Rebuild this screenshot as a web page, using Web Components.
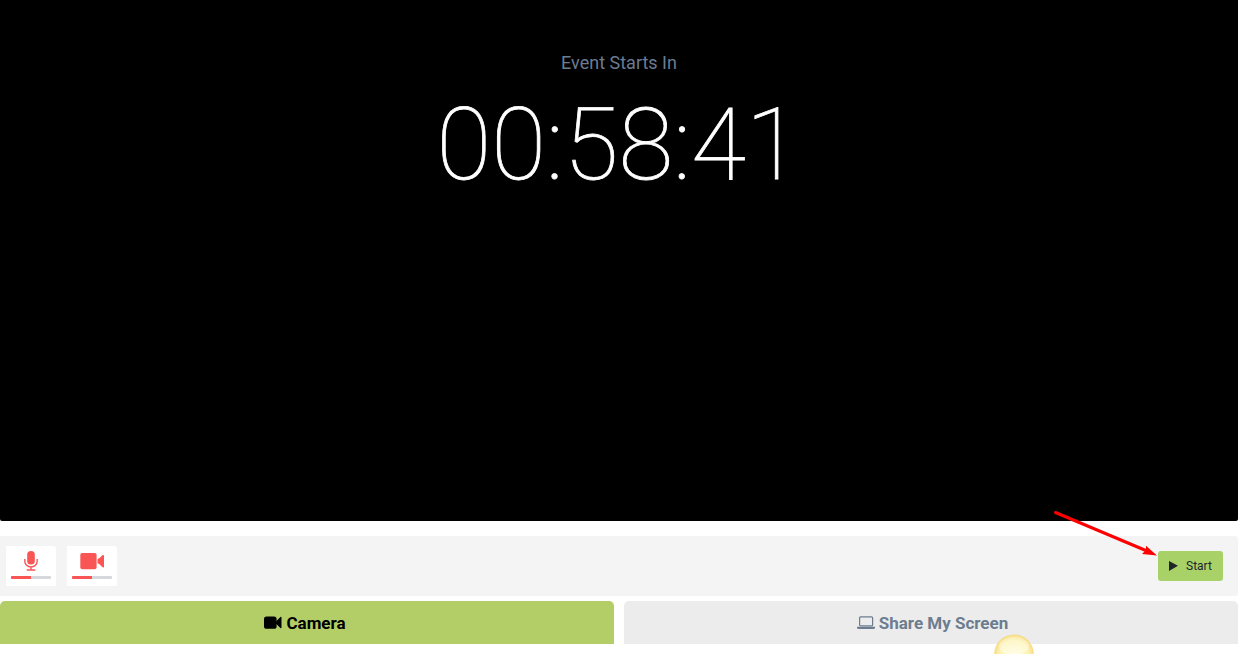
<!DOCTYPE html>
<html lang="en">
<head>
  <meta charset="UTF-8">
  <title>Event Studio</title>
  <style>
    body {
      background-color: white;
      font-family: Roboto, "Liberation Sans", sans-serif;
      margin: 0;
      overflow: hidden;
    }
  </style>
</head>
<body>
  <event-studio>
    <event-countdown label="Event Starts In" time="00:58:41"></event-countdown>
    <control-bar>
      <device-toggle>
        <svg width="14" height="20" viewBox="0 0 14 20">
          <rect x="3.2" y="0" width="7.6" height="13.6" rx="3.6" fill="#fa5555"/>
          <path d="M.8 8v2.3a6.2 5.7 0 0 0 12.4 0V8M7 16v3M2.7 19h8.6" fill="none" stroke="#fa5555" stroke-width="1.4"/>
        </svg>
      </device-toggle>
      <device-toggle>
        <svg width="24" height="20" viewBox="0 0 24 20">
          <rect x="0.3" y="2" width="16.3" height="16.3" rx="2" fill="#fa5555"/>
          <path d="M17.5 8.1C20 7.5 21.5 4.8 22.7 4.1Q24 3.5 24 5v10.5Q24 17 22.7 16.2C21.5 15.5 20 12.8 17.5 12.2z" fill="#fa5555"/>
        </svg>
      </device-toggle>
      <start-button slot="action">Start</start-button>
    </control-bar>
    <source-tabs>
      <source-tab active>
        <svg slot="icon" width="18" height="13" viewBox="0 0 18 13">
          <rect y=".4" width="12.6" height="12.4" rx="2.6" fill="black"/>
          <path d="M12 5.4 16.4 1.1Q17.5.4 17.5 1.7v9.6q0 1.3-1.1.6L12 7.8z" fill="black"/>
        </svg>
        Camera
      </source-tab>
      <source-tab>
        <svg slot="icon" width="18" height="13" viewBox="0 0 18 13">
          <rect x="2.6" y=".9" width="13" height="9" rx="1" fill="none" stroke="#6c7d8f" stroke-width="1.2"/>
          <path d="M0 10.8h18v.6q0 1.6-1.5 1.6h-15Q0 13 0 11.4z" fill="#6c7d8f"/>
        </svg>
        Share My Screen
      </source-tab>
    </source-tabs>
  </event-studio>
  <pointer-arrow></pointer-arrow>
  <click-spot></click-spot>

  <script>
    /**
     * Page column: countdown, controls, then the source tabs
     */
    class EventStudio extends HTMLElement {
      constructor() {
        super();
        this.attachShadow({ mode: "open" }).innerHTML = `
          <style>
            :host {
              display: flex;
              flex-direction: column;
              height: 654px;
            }
          </style>
          <slot></slot>
        `;
      }
    }

    /**
     * Black stage with the time left until the event
     */
    class EventCountdown extends HTMLElement {
      connectedCallback() {
        let label = this.getAttribute("label");
        let time = this.getAttribute("time");

        this.attachShadow({ mode: "open" }).innerHTML = `
          <style>
            :host {
              background-color: black;
              border-radius: 0 0 2px 2px;
              box-sizing: border-box;
              display: block;
              height: 521px;
              margin-bottom: 15px;
              padding-top: 50px;
              text-align: center;
            }

            .label {
              color: #6b7c93;
              font-size: 18px;
              line-height: 26px;
              margin: 0;
            }

            .time {
              -webkit-text-stroke: 0.8px white;
              color: white;
              font-size: 100px;
              font-weight: 100;
              line-height: 120px;
              margin: 9px 1px 0 0;
            }
          </style>
          <p class="label">${label}</p>
          <p class="time">${time}</p>
        `;
      }
    }

    class ControlBar extends HTMLElement {
      constructor() {
        super();
        this.attachShadow({ mode: "open" }).innerHTML = `
          <style>
            :host {
              align-items: center;
              background-color: #f4f4f4;
              border-radius: 0 3px 3px 0;
              box-sizing: border-box;
              display: flex;
              height: 60px;
              justify-content: space-between;
              margin-bottom: 5px;
              padding: 0 15px 0 6px;
            }

            .devices {
              display: flex;
              gap: 11px;
            }
          </style>
          <div class="devices"><slot></slot></div>
          <slot name="action"></slot>
        `;
      }
    }

    /**
     * Device button with its icon and a level meter underneath
     */
    class DeviceToggle extends HTMLElement {
      constructor() {
        super();
        this.attachShadow({ mode: "open" }).innerHTML = `
          <style>
            :host {
              align-items: center;
              background-color: white;
              border-radius: 0 3px 0 0;
              box-sizing: border-box;
              display: flex;
              flex-direction: column;
              gap: 5px;
              height: 40px;
              padding-top: 5px;
              width: 50px;
            }

            .meter {
              background-color: #d5d9dd;
              border-radius: 1px;
              height: 3px;
              overflow: hidden;
              width: 40px;
            }

            .level {
              background-color: #fa5555;
              height: 100%;
              width: 50%;
            }
          </style>
          <slot></slot>
          <div class="meter"><div class="level"></div></div>
        `;
      }
    }

    class StartButton extends HTMLElement {
      constructor() {
        super();
        this.attachShadow({ mode: "open" }).innerHTML = `
          <style>
            :host {
              display: block;
            }

            button {
              align-items: center;
              background-color: #a8d268;
              border: none;
              border-radius: 3px;
              color: #212529;
              display: flex;
              font: 12px Roboto, sans-serif;
              gap: 8px;
              height: 30px;
              padding: 0 0 0 11px;
              width: 65px;
            }
          </style>
          <button>
            <svg width="9" height="10" viewBox="0 0 9 10">
              <path d="M0 0 9 4.7 0 10z" fill="#212529"/>
            </svg>
            <slot></slot>
          </button>
        `;
      }
    }

    class SourceTabs extends HTMLElement {
      constructor() {
        super();
        this.attachShadow({ mode: "open" }).innerHTML = `
          <style>
            :host {
              display: grid;
              gap: 10px;
              grid-template-columns: 1fr 1fr;
            }
          </style>
          <slot></slot>
        `;
      }
    }

    class SourceTab extends HTMLElement {
      constructor() {
        super();
        this.attachShadow({ mode: "open" }).innerHTML = `
          <style>
            :host {
              align-items: center;
              background-color: #ececec;
              border-radius: 5px 5px 0 0;
              box-sizing: border-box;
              color: #6c7d8f;
              display: flex;
              font-size: 17px;
              font-weight: 700;
              gap: 4px;
              height: 43px;
              justify-content: center;
              padding-left: 3px;
            }

            :host([active]) {
              background-color: #b3ce66;
              color: black;
              padding: 0 4px 0 0;
            }
          </style>
          <slot name="icon"></slot>
          <span><slot></slot></span>
        `;
      }
    }

    /**
     * Red arrow lying over the page, aimed at the start button
     */
    class PointerArrow extends HTMLElement {
      constructor() {
        super();
        this.attachShadow({ mode: "open" }).innerHTML = `
          <style>
            :host {
              height: 50px;
              left: 1050px;
              pointer-events: none;
              position: absolute;
              top: 508px;
              width: 110px;
            }
          </style>
          <svg width="110" height="50" viewBox="0 0 110 50">
            <path d="M5.5 4.5 97 43" stroke="red" stroke-width="3" stroke-linecap="round"/>
            <path d="M107 47.5 96 37.7 96 42 92 46z" fill="red"/>
          </svg>
        `;
      }
    }

    /**
     * Yellow highlight, cut off by the bottom of the window
     */
    class ClickSpot extends HTMLElement {
      constructor() {
        super();
        this.attachShadow({ mode: "open" }).innerHTML = `
          <style>
            :host {
              height: 20px;
              left: 994px;
              overflow: hidden;
              pointer-events: none;
              position: absolute;
              top: 634px;
              width: 40px;
            }

            svg {
              display: block;
            }
          </style>
          <svg width="40" height="40" viewBox="0 0 40 40">
            <defs>
              <radialGradient id="glow">
                <stop offset="0" stop-color="#fffbd0"/>
                <stop offset=".7" stop-color="#fdf3b4"/>
                <stop offset=".92" stop-color="#fae394"/>
                <stop offset="1" stop-color="#f3d878"/>
              </radialGradient>
              <linearGradient id="shine" x2="0" y2="1">
                <stop offset="0" stop-color="#fff" stop-opacity=".2"/>
                <stop offset="1" stop-color="#fffff4" stop-opacity=".6"/>
              </linearGradient>
            </defs>
            <circle cx="20" cy="20.3" r="19.8" fill="url(#glow)"/>
            <ellipse cx="20" cy="12" rx="15" ry="9" fill="url(#shine)"/>
          </svg>
        `;
      }
    }

    customElements.define("event-studio", EventStudio);
    customElements.define("event-countdown", EventCountdown);
    customElements.define("control-bar", ControlBar);
    customElements.define("device-toggle", DeviceToggle);
    customElements.define("start-button", StartButton);
    customElements.define("source-tabs", SourceTabs);
    customElements.define("source-tab", SourceTab);
    customElements.define("pointer-arrow", PointerArrow);
    customElements.define("click-spot", ClickSpot);
  </script>
</body>
</html>
